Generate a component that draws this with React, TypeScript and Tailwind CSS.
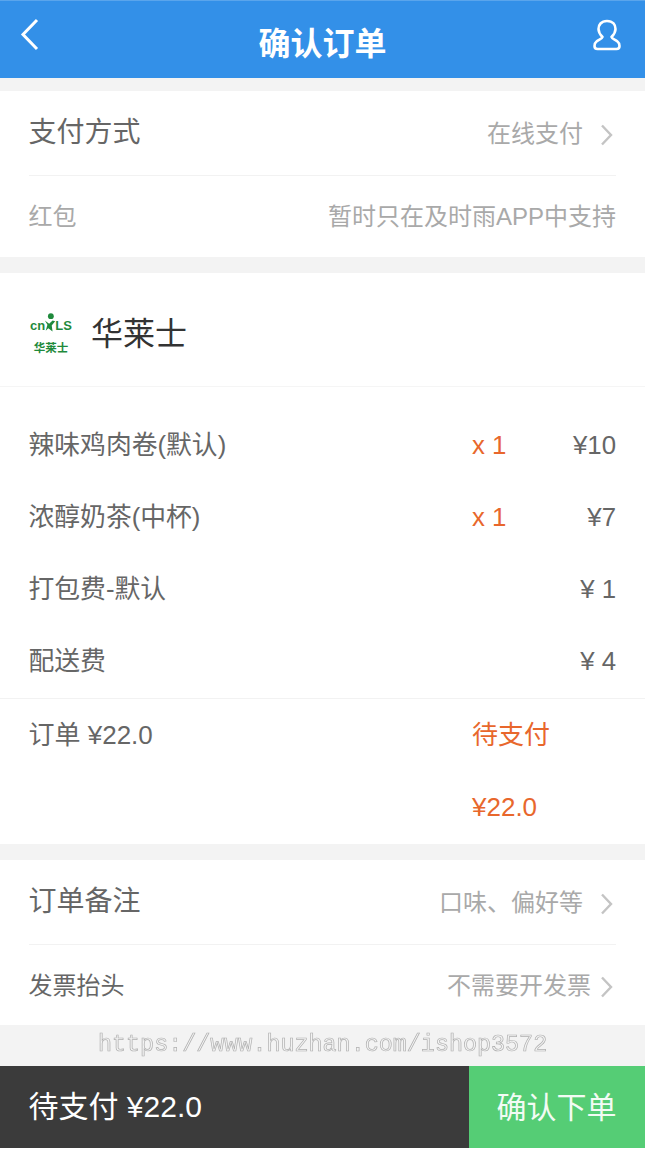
import React from "react";

const font = { fontFamily: '"Liberation Sans", "Noto Sans CJK SC", sans-serif' };

function Chevron() {
  return (
    <svg width="12" height="24" viewBox="0 0 12 24" fill="none" className="mr-[3px] mt-[2px] shrink-0">
      <path d="M1 2.5 L10 12 L1 21.5" stroke="#c4c4c4" strokeWidth="2.4" />
    </svg>
  );
}

function Item({ name, qty, price }: { name: string; qty?: string; price: string }) {
  return (
    <div className="flex h-[72px] items-center text-[25.8px] text-[#666]">
      <div className="w-[443.5px]">{name}</div>
      <div className="w-[60px] text-[#e8672c]">{qty}</div>
      <div className="flex-1 text-right">{price}</div>
    </div>
  );
}

function Logo() {
  return (
    <div className="flex w-[48px] flex-col items-center font-bold text-[#1f8a3c]">
      <div className="flex h-[22px] items-end text-[13px] leading-[16px]">
        <span>cn</span>
        <svg width="12" height="22" viewBox="0 0 14 24" className="mx-[-1px]">
          <circle cx="8" cy="4" r="3.4" fill="#1f8a3c" />
          <path d="M1 9 L6 13 L10 9 L13 10 L9 15 L10 22 L5 18 L2 21 L4 14 Z" fill="#1f8a3c" />
        </svg>
        <span>LS</span>
      </div>
      <div className="mt-[9px] text-[11.5px] leading-none">华莱士</div>
    </div>
  );
}

export default function App() {
  return (
    <div className="h-[1150px] w-[648px] overflow-hidden bg-white" style={font}>
      <div className="flex h-[1148px] w-[645px] flex-col bg-[#f3f3f3]">
        <header className="flex h-[78px] shrink-0 items-center justify-between border-t border-[#5aa5ec] bg-[#3390e8] pl-[20px] pr-[24px] text-white">
          <svg width="20" height="36" viewBox="0 0 20 36" fill="none" className="mb-[10px]">
            <path d="M17 3 L3 17.5 L17 32" stroke="#fff" strokeWidth="3" />
          </svg>
          <h1 className="ml-[12px] mt-[8px] text-[32px] font-bold leading-none">确认订单</h1>
          <svg width="28" height="32" viewBox="0 0 28 32" fill="none" className="mb-[10px]">
            <path
              d="M14 2 C8 2 5.5 6 5.5 10 C5.5 13.5 7.5 16 9.5 18 C9 20 6 20.5 3.5 22.5 C1.5 24 1.5 26 1.5 27 C1.5 29 2.5 30 4.5 30 L23.5 30 C25.5 30 26.5 29 26.5 27 C26.5 26 26.5 24 24.5 22.5 C22 20.5 19 20 18.5 18 C20.5 16 22.5 13.5 22.5 10 C22.5 6 20 2 14 2 Z"
              stroke="#fff"
              strokeWidth="2.6"
              strokeLinejoin="round"
            />
          </svg>
        </header>

        <section className="mt-[13px] bg-white pl-[28.5px] pr-[29px]">
          <div className="flex h-[85px] items-center justify-between border-b border-[#f2f2f2]">
            <span className="text-[28px] text-[#666]">支付方式</span>
            <span className="mt-[2px] flex items-center gap-[18px] text-[24px] text-[#a9a9a9]">
              在线支付
              <Chevron />
            </span>
          </div>
          <div className="flex h-[81px] items-center justify-between text-[24px] text-[#a9a9a9]">
            <span>红包</span>
            <span>暂时只在及时雨APP中支持</span>
          </div>
        </section>

        <section className="mt-[16px] bg-white">
          <div className="flex h-[114px] items-center border-b border-[#f5f5f5] pl-[27px] pt-[8px]">
            <Logo />
            <span className="ml-[16px] text-[32px] text-[#333]">华莱士</span>
          </div>
          <div className="border-b border-[#f2f2f2] pl-[28.5px] pr-[29px] pt-[22px] pb-[1px]">
            <Item name="辣味鸡肉卷(默认)" qty="x 1" price="¥10" />
            <Item name="浓醇奶茶(中杯)" qty="x 1" price="¥7" />
            <Item name="打包费-默认" price="¥ 1" />
            <Item name="配送费" price="¥ 4" />
          </div>
          <div className="flex pl-[28.5px] pr-[29px] text-[26px]">
            <div className="w-[443.5px] pt-[18px] leading-[36px] text-[#666]">订单 ¥22.0</div>
            <div className="text-[#e8672c]">
              <div className="flex h-[72px] items-center">待支付</div>
              <div className="flex h-[73px] items-center">¥22.0</div>
            </div>
          </div>
        </section>

        <section className="mt-[16px] bg-white pl-[28.5px] pr-[29px]">
          <div className="flex h-[85px] items-center justify-between border-b border-[#f2f2f2]">
            <span className="text-[28px] text-[#666]">订单备注</span>
            <span className="mt-[2px] flex items-center gap-[18px] text-[24px] text-[#a9a9a9]">
              口味、偏好等
              <Chevron />
            </span>
          </div>
          <div className="flex h-[80px] items-center justify-between pt-[2px]">
            <span className="text-[24px] text-[#666]">发票抬头</span>
            <span className="flex items-center gap-[10px] text-[24px] text-[#a9a9a9]">
              不需要开发票
              <Chevron />
            </span>
          </div>
        </section>

        <div className="flex h-[41px] shrink-0 items-center justify-center">
          <span
            className="text-[23.4px] leading-none text-transparent opacity-90 [will-change:transform] [-webkit-text-stroke:0.7px_#a8a8a8]"
            style={{ fontFamily: '"Liberation Mono", monospace' }}
          >
            https://www.huzhan.com/ishop3572
          </span>
        </div>

        <footer className="flex h-[82px] shrink-0 bg-[#3b3b3b] text-[30px] text-white">
          <div className="flex flex-1 items-center pb-[2px] pl-[28.5px]">待支付 ¥22.0</div>
          <div className="flex w-[176px] items-center justify-center bg-[#55cd75] pr-[1px] text-[#f2fbf4]">确认下单</div>
        </footer>
      </div>
    </div>
  );
}
